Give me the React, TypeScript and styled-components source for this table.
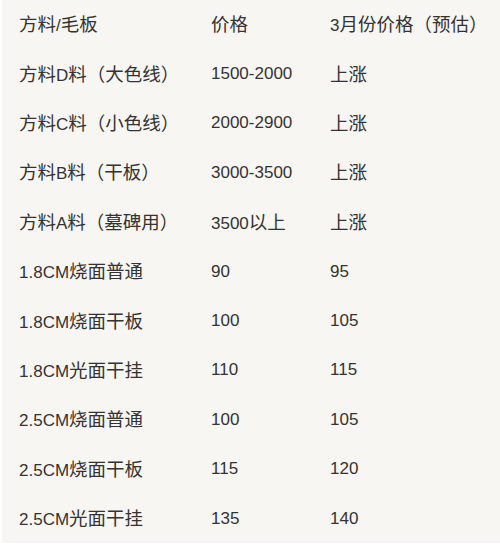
import styled, { createGlobalStyle } from 'styled-components';

const GlobalStyle = createGlobalStyle`
  html, body {
    margin: 0;
    padding: 0;
    background: #ffffff;
  }
`;

const rows: [string, string, string][] = [
  ['方料/毛板', '价格', '3月份价格（预估）'],
  ['方料D料（大色线）', '1500-2000', '上涨'],
  ['方料C料（小色线）', '2000-2900', '上涨'],
  ['方料B料（干板）', '3000-3500', '上涨'],
  ['方料A料（墓碑用）', '3500以上', '上涨'],
  ['1.8CM烧面普通', '90', '95'],
  ['1.8CM烧面干板', '100', '105'],
  ['1.8CM光面干挂', '110', '115'],
  ['2.5CM烧面普通', '100', '105'],
  ['2.5CM烧面干板', '115', '120'],
  ['2.5CM光面干挂', '135', '140'],
];

// CJK glyphs are drawn a bit larger than the latin ones in the original
const CJK = /([\u3000-\u9fff\uff00-\uffef]+)/;

function Text({ value }: { value: string }) {
  return <>
    {value.split(CJK).filter(Boolean).map((part, i) =>
      CJK.test(part) ? <Han key={i}>{part}</Han> : <span key={i}>{part}</span>
    )}
  </>
}

function App() {
  return <>
    <GlobalStyle />
    <Page>
      <PriceTable>
        {rows.map((row, i) => (
          <Row key={i}>
            {row.map((value, j) => (
              <Cell key={j}><Text value={value} /></Cell>
            ))}
          </Row>
        ))}
      </PriceTable>
    </Page>
  </>
}
export default App;

const Page = styled.div`
  width: 500px;
  height: 549px;
  padding-left: 2px;
  box-sizing: border-box;
  background: #ffffff;
`;

const PriceTable = styled.div`
  display: flex;
  flex-direction: column;
  background: #f8f6f2;
  padding-left: 17px;
  font-family: "Liberation Sans", Arial, "Noto Sans CJK SC", sans-serif;
  font-size: 17px;
  color: #333333;
`;

const Row = styled.div`
  display: grid;
  grid-template-columns: 192px 119px 1fr;
  align-items: center;
  height: 49.4px;
`;

const Cell = styled.div`
  white-space: nowrap;
  line-height: 20px;
`;

const Han = styled.span`
  font-family: "Noto Sans CJK SC", sans-serif;
  font-size: 18.5px;
`;
